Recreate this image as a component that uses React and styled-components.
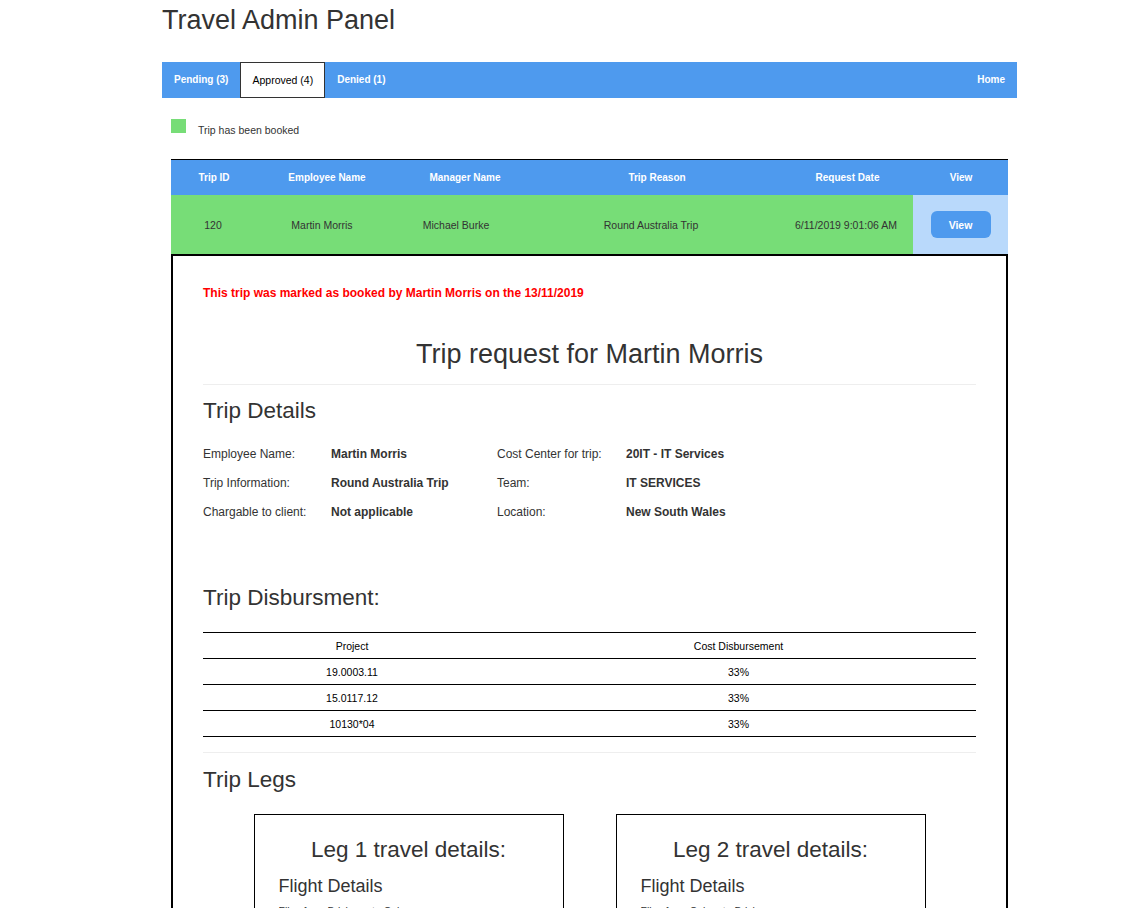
import React from 'react';
import styled, { createGlobalStyle } from 'styled-components';

const GlobalStyle = createGlobalStyle`
  body {
    margin: 0;
    background: #fff;
    font-family: "Liberation Sans", Arial, sans-serif;
    color: #333;
  }
`;

const BLUE = '#4e9aee';
const GREEN = '#77dd77';

const Page = styled.div`
  width: 855px;
  margin-left: 162px;
`;

const Title = styled.h1`
  margin: 5px 0 0;
  font-size: 27px;
  line-height: 30px;
  font-weight: 400;
  color: #333;
`;

const NavBar = styled.nav`
  margin-top: 27px;
  height: 36px;
  background: ${BLUE};
  display: flex;
  align-items: stretch;
`;

const NavTab = styled.div`
  display: flex;
  align-items: center;
  padding: 0 11px 1px;
  font-size: ${p => (p.active ? '10.5px' : '10px')};
  font-weight: ${p => (p.active ? 400 : 700)};
  color: ${p => (p.active ? '#000' : '#fff')};
  background: ${p => (p.active ? '#fff' : 'transparent')};
  border: 1px solid ${p => (p.active ? '#333' : 'transparent')};
  margin-left: ${p => (p.right ? 'auto' : '0')};
`;

const Legend = styled.div`
  margin: 21px 0 0 9px;
  display: flex;
  align-items: flex-start;
  gap: 12px;
`;

const Swatch = styled.span`
  width: 15px;
  height: 14px;
  background: ${GREEN};
`;

const LegendText = styled.span`
  margin-top: 5px;
  font-size: 10.5px;
  line-height: 12px;
  color: #333;
`;

const TripTable = styled.div`
  margin: 23px 9px 0;
`;

const TripRow = styled.div`
  display: grid;
  grid-template-columns: ${p =>
    p.head ? '86px 140px 136px 248px 133px 94px' : '84px 134px 134px 256px 134px 95px'};
  height: ${p => (p.head ? '35px' : '59px')};
  background: ${p => (p.head ? BLUE : GREEN)};
  border-top: ${p => (p.head ? '1px solid #000' : 'none')};
`;

const Cell = styled.div`
  display: flex;
  align-items: center;
  justify-content: center;
  font-size: ${p => (p.head ? '10px' : '10.5px')};
  font-weight: ${p => (p.head ? 700 : 400)};
  color: ${p => (p.head ? '#fff' : '#333')};
  background: ${p => (p.tint ? '#b9d9fb' : 'transparent')};
`;

const ViewButton = styled.button`
  width: 60px;
  height: 27px;
  border: none;
  border-radius: 6px;
  background: ${BLUE};
  color: #fff;
  font-family: inherit;
  font-size: 10.5px;
  font-weight: 700;
  cursor: pointer;
`;

const Panel = styled.section`
  border: 2px solid #000;
  padding: 0 30px 40px;
`;

const Notice = styled.p`
  margin: 30px 0 0;
  font-size: 12px;
  line-height: 14px;
  font-weight: 700;
  color: #ff0000;
`;

const RequestTitle = styled.h1`
  margin: 39px 0 0;
  text-align: center;
  font-size: 27px;
  line-height: 30px;
  font-weight: 400;
  color: #333;
`;

const Rule = styled.hr`
  margin: ${p => p.top || 15}px 0 0;
  border: none;
  border-top: 1px solid #eee;
`;

const SectionTitle = styled.h2`
  margin: ${p => p.top}px 0 0;
  font-size: 22.5px;
  line-height: 25px;
  font-weight: 400;
  color: #333;
`;

const DetailGrid = styled.div`
  margin-top: 16px;
  display: grid;
  grid-template-columns: 128px 166px 129px 1fr;
  grid-auto-rows: 29px;
  align-items: center;
  font-size: 12px;
`;

const Label = styled.span`
  color: #333;
`;

const Value = styled.span`
  font-weight: 700;
  color: #333;
`;

const Disbursement = styled.table`
  margin-top: 22px;
  width: 100%;
  border-collapse: collapse;
  border-top: 1px solid #000;
  font-size: 10.5px;
  color: #000;
`;

const DisCell = styled.td`
  height: 25px;
  padding: 0;
  text-align: center;
  border-bottom: 1px solid #000;
  width: ${p => p.width || 'auto'};
  font-weight: 400;
`;

const Legs = styled.div`
  margin-top: 22px;
  display: flex;
  justify-content: center;
  gap: 52px;
`;

const LegCard = styled.div`
  width: 310px;
  box-sizing: border-box;
  border: 1px solid #000;
  padding: 22px 24px 24px;
`;

const LegTitle = styled.h2`
  margin: 0;
  text-align: center;
  font-size: 22.5px;
  line-height: 25px;
  font-weight: 400;
  color: #333;
`;

const LegSub = styled.h3`
  margin: 14px 0 0;
  font-size: 18px;
  line-height: 20px;
  font-weight: 400;
  color: #333;
`;

const LegLine = styled.p`
  margin: 8px 0 0;
  font-size: 10.5px;
  line-height: 14px;
  color: #333;
`;

const details = [
  ['Employee Name:', 'Martin Morris', 'Cost Center for trip:', '20IT - IT Services'],
  ['Trip Information:', 'Round Australia Trip', 'Team:', 'IT SERVICES'],
  ['Chargable to client:', 'Not applicable', 'Location:', 'New South Wales'],
];

const projects = [
  ['19.0003.11', '33%'],
  ['15.0117.12', '33%'],
  ['10130*04', '33%'],
];

const legs = [
  { n: 1, from: 'Brisbane', to: 'Cairns' },
  { n: 2, from: 'Cairns', to: 'Brisbane' },
];

export default function App() {
  return (
    <>
      <GlobalStyle />
      <Page>
        <Title>Travel Admin Panel</Title>
        <NavBar>
          <NavTab>Pending (3)</NavTab>
          <NavTab active>Approved (4)</NavTab>
          <NavTab>Denied (1)</NavTab>
          <NavTab right>Home</NavTab>
        </NavBar>

        <Legend>
          <Swatch />
          <LegendText>Trip has been booked</LegendText>
        </Legend>

        <TripTable>
          <TripRow head>
            <Cell head>Trip ID</Cell>
            <Cell head>Employee Name</Cell>
            <Cell head>Manager Name</Cell>
            <Cell head>Trip Reason</Cell>
            <Cell head>Request Date</Cell>
            <Cell head>View</Cell>
          </TripRow>
          <TripRow>
            <Cell>120</Cell>
            <Cell>Martin Morris</Cell>
            <Cell>Michael Burke</Cell>
            <Cell>Round Australia Trip</Cell>
            <Cell>6/11/2019 9:01:06 AM</Cell>
            <Cell tint>
              <ViewButton>View</ViewButton>
            </Cell>
          </TripRow>

          <Panel>
            <Notice>This trip was marked as booked by Martin Morris on the 13/11/2019</Notice>
            <RequestTitle>Trip request for Martin Morris</RequestTitle>
            <Rule />
            <SectionTitle top={13}>Trip Details</SectionTitle>
            <DetailGrid>
              {details.map(row => (
                <React.Fragment key={row[0]}>
                  <Label>{row[0]}</Label>
                  <Value>{row[1]}</Value>
                  <Label>{row[2]}</Label>
                  <Value>{row[3]}</Value>
                </React.Fragment>
              ))}
            </DetailGrid>

            <SectionTitle top={59}>Trip Disbursment:</SectionTitle>
            <Disbursement>
              <thead>
                <tr>
                  <DisCell as="th" width="298px">Project</DisCell>
                  <DisCell as="th">Cost Disbursement</DisCell>
                </tr>
              </thead>
              <tbody>
                {projects.map(([code, pct]) => (
                  <tr key={code}>
                    <DisCell>{code}</DisCell>
                    <DisCell>{pct}</DisCell>
                  </tr>
                ))}
              </tbody>
            </Disbursement>

            <Rule top={15} />
            <SectionTitle top={14}>Trip Legs</SectionTitle>
            <Legs>
              {legs.map(leg => (
                <LegCard key={leg.n}>
                  <LegTitle>Leg {leg.n} travel details:</LegTitle>
                  <LegSub>Flight Details</LegSub>
                  <LegLine>
                    Flies from {leg.from} to {leg.to}
                  </LegLine>
                  <LegLine>Departure: 13/11/2019</LegLine>
                </LegCard>
              ))}
            </Legs>
          </Panel>
        </TripTable>
      </Page>
    </>
  );
}
